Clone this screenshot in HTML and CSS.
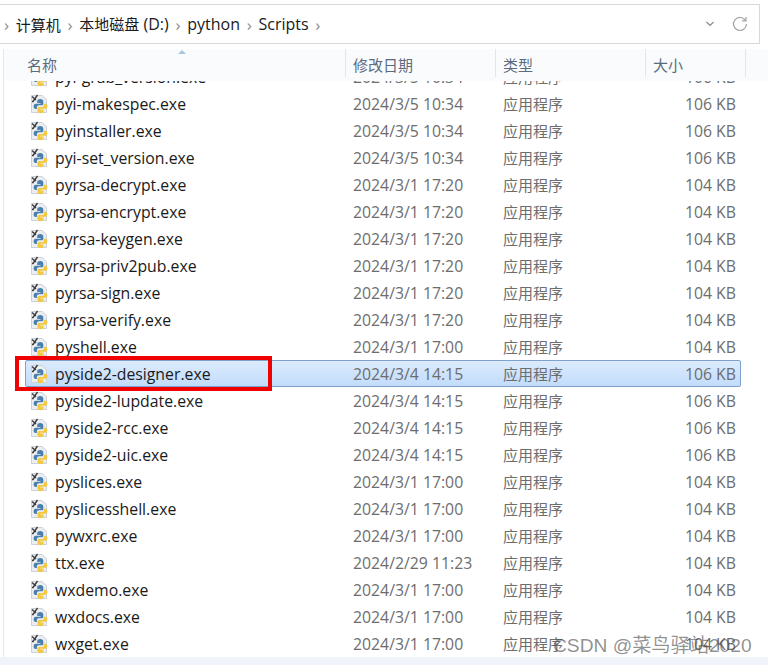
FILE: index.html
```html
<!DOCTYPE html>
<html lang="zh">

<head>
    <meta charset="UTF-8">
    <meta name="viewport" content="width=device-width, initial-scale=1.0">
    <title>Scripts</title>
    <link rel="stylesheet" href="styles.css">
</head>

<body>
    <svg class="icon-defs" width="0" height="0">
        <symbol id="exe" viewBox="0 0 20 20">
            <path d="M2.500 1.500H13L17.500 5.500V18.500H2.500Z" fill="#eceef1" stroke="#cdd1d6"/>
            <path d="M8.500 1L4 7.500M3 2.500L7 6M3 7.500H4.500" stroke="#3c3c3c" stroke-width="1.400" fill="none"/>
            <path d="M11.200 5C9 5 8.200 6 8.200 7.300V9H11.500V9.800H6.800C5.300 9.800 4.600 11 4.600 12.500C4.600 14 5.300 15 6.700 15H7.900V13.300C7.900 12.200 8.800 11.300 10 11.300H12.700C13.700 11.300 14.300 10.600 14.300 9.700V7.300C14.300 6 13.300 5 11.200 5Z" fill="#4a7fae"/>
            <path d="M14.900 9.700V11.200C14.900 12.400 14 13.100 13 13.100H10.200C9.200 13.100 8.500 13.800 8.500 14.800V17.100C8.500 18.300 9.700 19.200 11.500 19.200C13.300 19.200 14.500 18.300 14.500 17.100V15.600H11.300V14.800H16.100C17.500 14.800 18.400 13.800 18.400 12.200C18.400 10.700 17.500 9.700 16.100 9.700Z" fill="#f5c93f"/>
        </symbol>
    </svg>

    <div class="window">
        <div class="address-bar">
            <div class="crumbs">
                <span class="sep">›</span><span>计算机</span>
                <span class="sep">›</span><span>本地磁盘<span class="latin"> (D:)</span></span>
                <span class="sep">›</span><span class="latin">python</span>
                <span class="sep">›</span><span class="latin">Scripts</span>
                <span class="sep">›</span>
            </div>
            <svg class="chevron" width="10" height="6" viewBox="0 0 10 6">
                <path d="M1.500 1L5 4.500L8.500 1" fill="none" stroke="#8a8a8a" stroke-width="1.200"/>
            </svg>
            <svg class="refresh" width="16" height="16" viewBox="0 0 16 16">
                <path d="M13.500 4.500A6.500 6.500 0 1 0 14.500 8" fill="none" stroke="#a3a3a3" stroke-width="1.200"/>
                <path d="M10 4.800H14V1" fill="none" stroke="#a3a3a3" stroke-width="1.200"/>
            </svg>
        </div>

        <div class="file-pane">
            <div class="columns">
                <div class="col col-name">名称<span class="sort-arrow"></span></div>
                <div class="col col-date">修改日期</div>
                <div class="col col-type">类型</div>
                <div class="col col-size">大小</div>
            </div>

            <div class="file-list">
                <div class="row"><svg class="file-icon"><use href="#exe"/></svg><span class="name">pyi-grab_version.exe</span><span class="date">2024/3/5 10:34</span><span class="type">应用程序</span><span class="size">106 KB</span></div>
                <div class="row"><svg class="file-icon"><use href="#exe"/></svg><span class="name">pyi-makespec.exe</span><span class="date">2024/3/5 10:34</span><span class="type">应用程序</span><span class="size">106 KB</span></div>
                <div class="row"><svg class="file-icon"><use href="#exe"/></svg><span class="name">pyinstaller.exe</span><span class="date">2024/3/5 10:34</span><span class="type">应用程序</span><span class="size">106 KB</span></div>
                <div class="row"><svg class="file-icon"><use href="#exe"/></svg><span class="name">pyi-set_version.exe</span><span class="date">2024/3/5 10:34</span><span class="type">应用程序</span><span class="size">106 KB</span></div>
                <div class="row"><svg class="file-icon"><use href="#exe"/></svg><span class="name">pyrsa-decrypt.exe</span><span class="date">2024/3/1 17:20</span><span class="type">应用程序</span><span class="size">104 KB</span></div>
                <div class="row"><svg class="file-icon"><use href="#exe"/></svg><span class="name">pyrsa-encrypt.exe</span><span class="date">2024/3/1 17:20</span><span class="type">应用程序</span><span class="size">104 KB</span></div>
                <div class="row"><svg class="file-icon"><use href="#exe"/></svg><span class="name">pyrsa-keygen.exe</span><span class="date">2024/3/1 17:20</span><span class="type">应用程序</span><span class="size">104 KB</span></div>
                <div class="row"><svg class="file-icon"><use href="#exe"/></svg><span class="name">pyrsa-priv2pub.exe</span><span class="date">2024/3/1 17:20</span><span class="type">应用程序</span><span class="size">104 KB</span></div>
                <div class="row"><svg class="file-icon"><use href="#exe"/></svg><span class="name">pyrsa-sign.exe</span><span class="date">2024/3/1 17:20</span><span class="type">应用程序</span><span class="size">104 KB</span></div>
                <div class="row"><svg class="file-icon"><use href="#exe"/></svg><span class="name">pyrsa-verify.exe</span><span class="date">2024/3/1 17:20</span><span class="type">应用程序</span><span class="size">104 KB</span></div>
                <div class="row"><svg class="file-icon"><use href="#exe"/></svg><span class="name">pyshell.exe</span><span class="date">2024/3/1 17:00</span><span class="type">应用程序</span><span class="size">104 KB</span></div>
                <div class="row selected"><svg class="file-icon"><use href="#exe"/></svg><span class="name">pyside2-designer.exe</span><span class="date">2024/3/4 14:15</span><span class="type">应用程序</span><span class="size">106 KB</span><div class="highlight-box"></div></div>
                <div class="row"><svg class="file-icon"><use href="#exe"/></svg><span class="name">pyside2-lupdate.exe</span><span class="date">2024/3/4 14:15</span><span class="type">应用程序</span><span class="size">106 KB</span></div>
                <div class="row"><svg class="file-icon"><use href="#exe"/></svg><span class="name">pyside2-rcc.exe</span><span class="date">2024/3/4 14:15</span><span class="type">应用程序</span><span class="size">106 KB</span></div>
                <div class="row"><svg class="file-icon"><use href="#exe"/></svg><span class="name">pyside2-uic.exe</span><span class="date">2024/3/4 14:15</span><span class="type">应用程序</span><span class="size">106 KB</span></div>
                <div class="row"><svg class="file-icon"><use href="#exe"/></svg><span class="name">pyslices.exe</span><span class="date">2024/3/1 17:00</span><span class="type">应用程序</span><span class="size">104 KB</span></div>
                <div class="row"><svg class="file-icon"><use href="#exe"/></svg><span class="name">pyslicesshell.exe</span><span class="date">2024/3/1 17:00</span><span class="type">应用程序</span><span class="size">104 KB</span></div>
                <div class="row"><svg class="file-icon"><use href="#exe"/></svg><span class="name">pywxrc.exe</span><span class="date">2024/3/1 17:00</span><span class="type">应用程序</span><span class="size">104 KB</span></div>
                <div class="row"><svg class="file-icon"><use href="#exe"/></svg><span class="name">ttx.exe</span><span class="date">2024/2/29 11:23</span><span class="type">应用程序</span><span class="size">104 KB</span></div>
                <div class="row"><svg class="file-icon"><use href="#exe"/></svg><span class="name">wxdemo.exe</span><span class="date">2024/3/1 17:00</span><span class="type">应用程序</span><span class="size">104 KB</span></div>
                <div class="row"><svg class="file-icon"><use href="#exe"/></svg><span class="name">wxdocs.exe</span><span class="date">2024/3/1 17:00</span><span class="type">应用程序</span><span class="size">104 KB</span></div>
                <div class="row"><svg class="file-icon"><use href="#exe"/></svg><span class="name">wxget.exe</span><span class="date">2024/3/1 17:00</span><span class="type">应用程序</span><span class="size">104 KB</span></div>
            </div>
        </div>

        <div class="bottom-strip"></div>
    </div>

    <div class="watermark">CSDN @菜鸟驿站2020</div>
</body>

</html>
```

FILE: styles.css
```css
/* 页面基本样式 */
html,
body {
    height: 100%;
}

body {
    margin: 0;
    overflow: hidden;
    background-color: #fff;
    color: #1a1a1a;
    font-family: "Open Sans", "Noto Sans CJK SC", sans-serif;
    font-size: 15.8px;
}

.icon-defs {
    display: none;
}

.window {
    display: flex;
    flex-direction: column;
    height: 100%;
    padding-top: 4px;
    box-sizing: border-box;
}

/* 地址栏 */
.address-bar {
    display: flex;
    align-items: center;
    flex-shrink: 0;
    width: 760px;
    height: 40px;
    box-sizing: border-box;
    border: 1px solid #d9d9d9;
    border-left: none;
    padding-right: 11px;
}

.crumbs {
    display: flex;
    align-items: center;
    flex: 1;
    padding-left: 4px;
    gap: 6.75px;
    font-size: 15px;
}

.latin {
    font-size: 16px;
}

.sep {
    width: 5px;
    color: #8c8c8c;
    font-size: 17px;
}

.chevron {
    margin-right: 17px;
}

/* 文件列表 */
.file-pane {
    display: flex;
    flex-direction: column;
    flex: 1;
    min-height: 0;
    margin-top: 5px;
    margin-left: 3px;
    border-left: 1px solid #e3e8ef;
}

.columns {
    display: flex;
    align-items: flex-start;
    flex-shrink: 0;
    height: 32px;
    background-color: #fafbfd;
    color: #5a6b80;
    font-size: 15px;
}

.col {
    position: relative;
    display: flex;
    align-items: center;
    height: 28px;
    box-sizing: border-box;
    border-right: 1px solid #dfe8f2;
    padding-left: 7px;
    padding-top: 3px;
}

.col-name {
    width: 342px;
    padding-left: 23px;
}

.col-date {
    width: 150px;
}

.col-type {
    width: 150px;
}

.col-size {
    width: 100px;
}

.sort-arrow {
    position: absolute;
    left: 174px;
    top: 1px;
    border-left: 4px solid transparent;
    border-right: 4px solid transparent;
    border-bottom: 4px solid #a9c6e0;
}

.file-list {
    display: flex;
    flex-direction: column;
    justify-content: flex-end;
    flex: 1;
    min-height: 0;
    overflow: hidden;
}

.row {
    position: relative;
    display: flex;
    align-items: center;
    flex-shrink: 0;
    width: 716px;
    height: 27px;
    box-sizing: border-box;
    margin-left: 21px;
    border: 1px solid transparent;
    border-radius: 2px;
}

.row.selected {
    border-color: #7da2ce;
    background: linear-gradient(#dcebfc, #c1dcfc);
}

.file-icon {
    flex-shrink: 0;
    width: 20px;
    height: 20px;
    margin-left: 3px;
}

.name {
    width: 298px;
    margin-left: 6px;
    white-space: nowrap;
}

.date {
    width: 150px;
    color: #6d6d6d;
}

.type {
    width: 137px;
    color: #6d6d6d;
    font-size: 15px;
}

.size {
    width: 96px;
    color: #6d6d6d;
    text-align: right;
    white-space: nowrap;
}

/* 红色标注框 */
.highlight-box {
    position: absolute;
    left: -11px;
    top: -5px;
    width: 257px;
    height: 35px;
    box-sizing: border-box;
    border: 4px solid #f00000;
}

.bottom-strip {
    flex-shrink: 0;
    height: 8px;
    background-color: #eff3fa;
}

.watermark {
    position: absolute;
    left: 553px;
    top: 630px;
    color: rgba(70, 70, 70, 0.6);
    font-family: "Liberation Sans", "Noto Sans CJK SC", sans-serif;
    font-size: 19.2px;
    white-space: nowrap;
}
```
